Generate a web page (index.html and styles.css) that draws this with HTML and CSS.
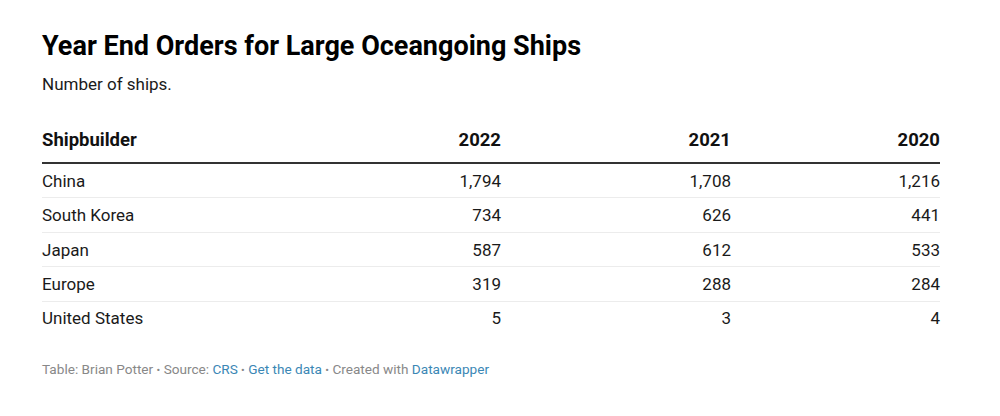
FILE: index.html
```html
<!DOCTYPE html>
<html>
<head>
<meta charset="utf-8">
<link rel="stylesheet" href="styles.css">
</head>
<body>
<div class="chart">
  <h1 class="title">Year End Orders for Large Oceangoing Ships</h1>
  <p class="desc">Number of ships.</p>
  <table class="tbl">
    <colgroup>
      <col class="c1"><col class="c2"><col class="c3"><col class="c4">
    </colgroup>
    <thead>
      <tr><th class="l">Shipbuilder</th><th>2022</th><th>2021</th><th>2020</th></tr>
    </thead>
    <tbody>
      <tr><td class="l">China</td><td>1,794</td><td>1,708</td><td>1,216</td></tr>
      <tr><td class="l">South Korea</td><td>734</td><td>626</td><td>441</td></tr>
      <tr><td class="l">Japan</td><td>587</td><td>612</td><td>533</td></tr>
      <tr><td class="l">Europe</td><td>319</td><td>288</td><td>284</td></tr>
      <tr><td class="l">United States</td><td>5</td><td>3</td><td>4</td></tr>
    </tbody>
  </table>
  <div class="footer">Table: Brian Potter <span class="dot">•</span> Source: <a href="#">CRS</a> <span class="dot">•</span> <a href="#">Get the data</a> <span class="dot">•</span> Created with <a href="#">Datawrapper</a></div>
</div>
</body>
</html>
```
FILE: styles.css
```css
html, body {
  margin: 0;
  padding: 0;
  background: #fff;
}
body {
  font-family: Roboto, "Liberation Sans", sans-serif;
  color: #181818;
}
.chart {
  padding: 30px 60px 0 42px;
  width: 898px;
}
.title {
  margin: 0;
  font-size: 27px;
  font-weight: 700;
  line-height: 32px;
  color: #000;
}
.desc {
  margin: 11px 0 0;
  font-size: 17px;
  line-height: 22px;
  color: #1a1a1a;
}
.tbl {
  margin-top: 34px;
  width: 898px;
  border-collapse: collapse;
  table-layout: fixed;
  font-size: 17px;
}
.c1 { width: 250px; }
.c2 { width: 209px; }
.c3 { width: 230px; }
.c4 { width: 209px; }
th, td {
  text-align: right;
  padding: 0;
}
th.l, td.l { text-align: left; }
thead th {
  font-weight: 700;
  color: #111;
  font-size: 18.5px;
  line-height: 22px;
  padding: 0 0 11px;
  border-bottom: 2px solid #333;
}
tbody td {
  line-height: 18px;
  padding: 7.9px 0 7.5px;
  border-bottom: 1px solid #ececec;
  color: #1a1a1a;
}
tbody tr:last-child td { border-bottom: none; }
.footer {
  margin-top: 26px;
  font-size: 13.6px;
  line-height: 16px;
  color: #888;
}
.footer a {
  color: #3b87b5;
  text-decoration: none;
}
.dot { font-size: 11px; }
```
